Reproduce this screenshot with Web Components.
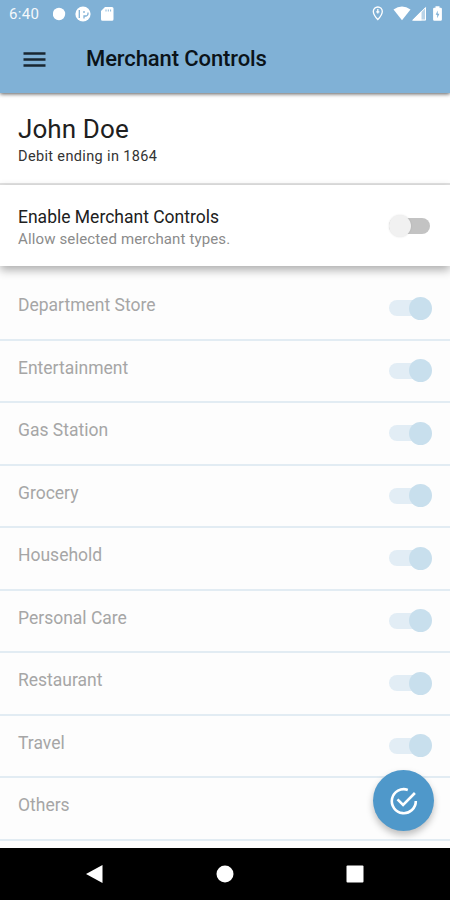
<!DOCTYPE html>
<html lang="en">
<head>
<meta charset="utf-8">
<title>Merchant Controls</title>
<style>
    html,
    body {
        margin: 0;
        height: 100%;
        overflow: hidden;
    }

    body {
        font-family: Roboto, "Liberation Sans", sans-serif;
        --color-bar: #80b1d6;
        --color-accent: #4f98ca;
        --color-text: #202020;
        --color-text-muted: #8b8b8b;
        --color-text-disabled: #a6a6a6;
    }
</style>
</head>
<body>
<merchant-screen>
    <status-bar slot="top" time="6:40"></status-bar>
    <app-bar slot="top">Merchant Controls</app-bar>
    <account-header name="John Doe">Debit ending in 1864</account-header>
    <control-summary label="Enable Merchant Controls">Allow selected merchant types.</control-summary>
    <merchant-list>
        <merchant-row>Department Store</merchant-row>
        <merchant-row>Entertainment</merchant-row>
        <merchant-row>Gas Station</merchant-row>
        <merchant-row>Grocery</merchant-row>
        <merchant-row>Household</merchant-row>
        <merchant-row>Personal Care</merchant-row>
        <merchant-row>Restaurant</merchant-row>
        <merchant-row>Travel</merchant-row>
        <merchant-row>Others</merchant-row>
    </merchant-list>
    <save-button slot="floating"></save-button>
    <nav-bar slot="bottom"></nav-bar>
</merchant-screen>

<script>
(() => {
    const define = (name, html, setup) => {
        const template = document.createElement("template")
        template.innerHTML = html

        customElements.define(name, class extends HTMLElement {
            constructor() {
                super()
                this.attachShadow({ mode: "open" }).append(template.content.cloneNode(true))
            }

            connectedCallback() {
                if (setup) setup(this, this.shadowRoot)
            }
        })
    }

    define("merchant-screen", `
        <style>
            :host {
                display: flex;
                flex-direction: column;
                position: relative;
                height: 900px;
                background: #fdfdfd;
                overflow: hidden;
            }

            .top {
                position: relative;
                z-index: 2;
                height: 93px;
                background: var(--color-bar);
                box-shadow: 0 1px 4px rgba(0, 0, 0, .65);
            }

            main {
                flex: 1;
                min-height: 0;
                overflow: hidden;
            }
        </style>
        <div class="top"><slot name="top"></slot></div>
        <main><slot></slot></main>
        <slot name="floating"></slot>
        <slot name="bottom"></slot>
    `)

    define("status-bar", `
        <style>
            :host {
                display: flex;
                align-items: center;
                justify-content: space-between;
                box-sizing: border-box;
                height: 28px;
                padding: 0 8px 0 9px;
                color: #fff;
            }

            .time {
                width: 44px;
                font-size: 15px;
                line-height: 28px;
                letter-spacing: .3px;
                opacity: .92;
            }

            .group {
                display: flex;
                align-items: center;
            }

            svg {
                display: block;
                fill: currentColor;
            }
        </style>
        <div class="group">
            <div class="time"></div>
            <svg width="76" height="28" viewBox="0 0 76 28">
                <circle cx="6" cy="14" r="6.2"/>
                <circle cx="30" cy="14" r="7.6"/>
                <path d="M26.300 10v8M31 18.500V16h2a2.500 2.500 0 0 0 1.800-3.500M31 11v2" fill="none" stroke="#80b1d6" stroke-width="1.300"/>
                <path d="M52 7h7a1.500 1.500 0 0 1 1.500 1.500v10.800a1.500 1.500 0 0 1-1.500 1.500h-9.500a1.500 1.500 0 0 1-1.500-1.500V11z"/>
                <path d="M53 9.500v2M55.300 9.500v2M57.600 9.500v2" stroke="#80b1d6" stroke-width=".9"/>
            </svg>
        </div>
        <svg width="72" height="28" viewBox="370 0 72 28">
            <path d="M377.800 7a4.500 4.500 0 0 0-4.500 4.500c0 3.300 4.500 8 4.500 8s4.500-4.700 4.500-8A4.500 4.500 0 0 0 377.800 7z" fill="none" stroke="#fff" stroke-width="1.300"/>
            <path d="M377.800 9v4.500M376.200 11.900h3.200" stroke="#fff" stroke-width="1.300"/>
            <path d="M393.500 9.500Q402 3.500 410.500 9.500L402 20.300z"/>
            <path d="M426 6.500v14H412z" opacity=".45"/>
            <path d="M421.500 11v9.500H412z"/>
            <path d="M425.500 7.700v12.300H413.200z" fill="none" stroke="#fff"/>
            <path d="M435.500 6.200h4v1.500h1.200a1.200 1.200 0 0 1 1.200 1.200v10.600a1.200 1.200 0 0 1-1.200 1.200h-6.400a1.200 1.200 0 0 1-1.200-1.200V8.900a1.200 1.200 0 0 1 1.200-1.200h1.200z"/>
            <path d="M437.700 10.500l-2 4.200h1.500v3.500l2.200-4.500h-1.700z" fill="#80b1d6"/>
        </svg>
    `, (el, root) => {
        root.querySelector(".time").textContent = el.getAttribute("time")
    })

    define("app-bar", `
        <style>
            :host {
                display: flex;
                align-items: center;
                gap: 40px;
                height: 62px;
                padding-left: 23px;
                color: #0b1319;
                font-size: 22px;
                font-weight: 500;
                letter-spacing: -.1px;
            }

            svg {
                display: block;
            }

            span {
                padding-bottom: 1px;
            }
        </style>
        <svg width="23" height="18" viewBox="0 0 23 18">
            <path d="M.5 3.500h22M.5 9.500h22M.5 15.500h22" stroke="#182631" stroke-width="2.500"/>
        </svg>
        <span><slot></slot></span>
    `)

    define("account-header", `
        <style>
            :host {
                display: block;
                box-sizing: border-box;
                height: 92px;
                padding: 20px 18px 0;
                border-bottom: 2px solid #e3e3e3;
                background: #fff;
                color: var(--color-text);
            }

            .name {
                font-size: 26px;
                line-height: 32px;
                letter-spacing: .1px;
            }

            .card {
                padding-top: 2px;
                color: #333;
                font-size: 14.5px;
                line-height: 20px;
                letter-spacing: .36px;
            }
        </style>
        <div class="name"></div>
        <div class="card"><slot></slot></div>
    `, (el, root) => {
        root.querySelector(".name").textContent = el.getAttribute("name")
    })

    define("control-summary", `
        <style>
            :host {
                display: flex;
                align-items: center;
                justify-content: space-between;
                position: relative;
                z-index: 1;
                box-sizing: border-box;
                height: 81px;
                padding: 0 18px;
                background: #fff;
                box-shadow: 0 4px 9px rgba(0, 0, 0, .32);
            }

            .text {
                padding-top: 2px;
            }

            .label {
                color: var(--color-text);
                font-size: 17.5px;
                line-height: 24px;
            }

            .hint {
                color: var(--color-text-muted);
                font-size: 15px;
                line-height: 20px;
                letter-spacing: .14px;
            }
        </style>
        <div class="text">
            <div class="label"></div>
            <div class="hint"><slot></slot></div>
        </div>
        <toggle-switch></toggle-switch>
    `, (el, root) => {
        root.querySelector(".label").textContent = el.getAttribute("label")
    })

    define("toggle-switch", `
        <style>
            :host {
                display: flex;
                align-items: center;
                width: 43px;
                height: 24px;
            }

            .track {
                display: flex;
                align-items: center;
                width: 41px;
                height: 16px;
                border-radius: 8px;
                background: #c3c3c3;
            }

            .thumb {
                flex: none;
                width: 22px;
                height: 22px;
                border-radius: 50%;
                background: #f1f1f1;
                box-shadow: 0 0 2px rgba(0, 0, 0, .12);
            }

            :host([on]) .track {
                justify-content: flex-end;
                background: #e2edf5;
            }

            :host([on]) .thumb {
                width: 23px;
                height: 23px;
                margin-right: -2px;
                background: #c8dfed;
                box-shadow: none;
            }
        </style>
        <div class="track"><div class="thumb"></div></div>
    `)

    define("merchant-list", `
        <style>
            :host {
                display: block;
                padding-top: 12.2px;
            }
        </style>
        <slot></slot>
    `)

    define("merchant-row", `
        <style>
            :host {
                display: flex;
                align-items: flex-start;
                justify-content: space-between;
                box-sizing: border-box;
                height: 62.5px;
                padding: 15.3px 18px 0;
                border-bottom: 2px solid #e2ecf3;
                color: var(--color-text-disabled);
                font-size: 17.5px;
                line-height: 24px;
            }

            toggle-switch {
                margin-top: 2.8px;
            }
        </style>
        <span><slot></slot></span>
        <toggle-switch on></toggle-switch>
    `)

    define("save-button", `
        <style>
            :host {
                display: flex;
                align-items: center;
                justify-content: center;
                position: absolute;
                right: 16px;
                bottom: 69px;
                z-index: 3;
                width: 61px;
                height: 61px;
                border-radius: 50%;
                background: var(--color-accent);
                box-shadow: 0 4px 7px rgba(0, 0, 0, .25);
            }
        </style>
        <svg width="30" height="30" viewBox="0 0 30 30" fill="none" stroke="#fff" stroke-width="2.6">
            <path d="M18.800 3.900A12 12 0 1 0 26.800 15"/>
            <path d="M8.500 13.400l5.600 5.600L25.900 7"/>
        </svg>
    `)

    define("nav-bar", `
        <style>
            :host {
                display: flex;
                align-items: center;
                justify-content: space-between;
                box-sizing: border-box;
                height: 52px;
                padding: 0 86px;
                background: #000;
            }

            svg {
                display: block;
                fill: #fff;
            }
        </style>
        <svg width="17" height="18" viewBox="0 0 17 18"><path d="M16.500 0v18L0 9z"/></svg>
        <svg width="18" height="18" viewBox="0 0 18 18"><circle cx="9" cy="9" r="8.500"/></svg>
        <svg width="18" height="18" viewBox="0 0 18 18"><rect x=".5" y=".5" width="17" height="17" rx="1"/></svg>
    `)
})()
</script>
</body>
</html>
